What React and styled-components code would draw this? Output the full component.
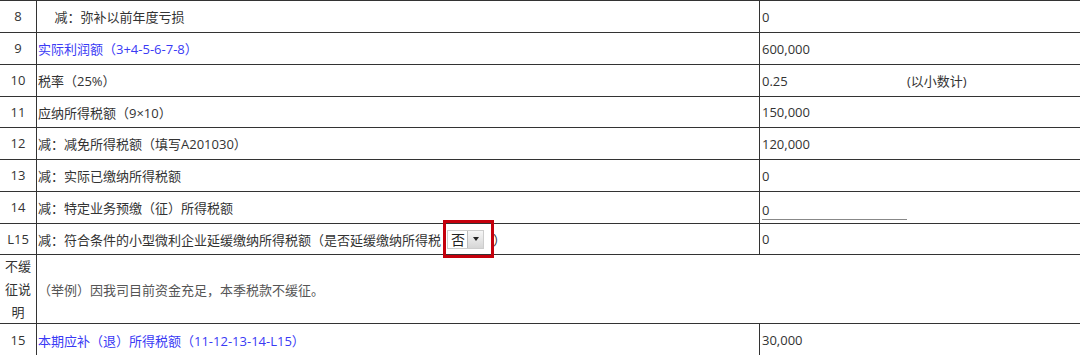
import React from 'react';
import styled, { createGlobalStyle } from 'styled-components';

const GlobalStyle = createGlobalStyle`
  html, body {
    margin: 0;
    padding: 0;
    background: #ffffff;
  }
  body {
    font-family: "Open Sans", "Noto Sans CJK SC", sans-serif;
    font-size: 13px;
    color: #333333;
  }
`;

const rows = [
  { no: '8', label: '\u3000\u00a0减：弥补以前年度亏损', value: '0', h: 32 },
  { no: '9', label: '实际利润额（3+4-5-6-7-8）', value: '600,000', h: 32, link: true },
  { no: '10', label: '税率（25%）', value: '0.25', note: '(以小数计)', h: 32 },
  { no: '11', label: '应纳所得税额（9×10）', value: '150,000', h: 31 },
  { no: '12', label: '减：减免所得税额（填写A201030）', value: '120,000', h: 32 },
  { no: '13', label: '减：实际已缴纳所得税额', value: '0', h: 32 },
  { no: '14', label: '减：特定业务预缴（征）所得税额', value: '0', input: true, h: 32 },
];

const Sheet = styled.div`
  width: 1080px;
  height: 355px;
  overflow: hidden;
  border-top: 1px solid #333;
`;

const Row = styled.div`
  display: grid;
  grid-template-columns: 37px 723px 1fr;
  height: ${(p) => p.$h}px;
  box-sizing: border-box;
  border-bottom: 1px solid #333;
`;

const NumCell = styled.div`
  display: flex;
  align-items: center;
  justify-content: center;
  border-right: 1px solid #333;
  line-height: 23px;
  text-align: center;
  padding: 0 2px;
`;

const LabelCell = styled.div`
  display: flex;
  align-items: center;
  padding-left: 1px;
  border-right: 1px solid #333;
  color: ${(p) => (p.$link ? '#3a3af5' : '#333')};
  white-space: nowrap;
`;

const ValueCell = styled.div`
  display: flex;
  align-items: center;
  padding-left: 2px;
`;

const NoteCell = styled.div`
  grid-column: 2 / 4;
  display: flex;
  align-items: center;
  padding-left: 1px;
  color: #555;
`;

const Amount = styled.span`
  width: 145px;
`;

const Hint = styled.span`
  color: #333;
`;

const UnderlineInput = styled.span`
  display: inline-block;
  width: 145px;
  height: 18px;
  line-height: 18px;
  border-bottom: 1px solid #888;
  margin-top: 6px;
`;

const Picker = styled.span`
  position: relative;
  display: inline-flex;
  margin-left: 6px;
  margin-right: 9px;
`;

const SelectBox = styled.span`
  display: inline-flex;
  align-items: stretch;
  height: 19px;
  border: 1px solid #cdcdcd;
  background: #fff;
  box-sizing: border-box;
`;

const SelectValue = styled.span`
  display: flex;
  align-items: center;
  padding: 0 2px 0 3px;
  font-size: 14px;
  color: #222;
`;

const SelectButton = styled.span`
  width: 15px;
  display: flex;
  align-items: center;
  justify-content: center;
  background: linear-gradient(#f6f6f6, #d6d6d6);
  border-left: 1px solid #bcbcbc;

  &::after {
    content: '';
    border-top: 4px solid #222;
    border-left: 3px solid transparent;
    border-right: 3px solid transparent;
  }
`;

const Highlight = styled.span`
  position: absolute;
  left: -4px;
  right: -10px;
  top: -10px;
  bottom: -9px;
  border: 3px solid #c4000c;
  pointer-events: none;
`;

const App = () => (
  <>
    <GlobalStyle />
    <Sheet>
      {rows.map((r) => (
        <Row key={r.no} $h={r.h}>
          <NumCell>{r.no}</NumCell>
          <LabelCell $link={r.link}>{r.label}</LabelCell>
          <ValueCell>
            {r.input ? (
              <UnderlineInput>{r.value}</UnderlineInput>
            ) : (
              <Amount>{r.value}</Amount>
            )}
            {r.note && <Hint>{r.note}</Hint>}
          </ValueCell>
        </Row>
      ))}
      <Row $h={31}>
        <NumCell>L15</NumCell>
        <LabelCell>
          减：符合条件的小型微利企业延缓缴纳所得税额（是否延缓缴纳所得税
          <Picker>
            <SelectBox>
              <SelectValue>否</SelectValue>
              <SelectButton />
            </SelectBox>
            <Highlight />
          </Picker>
          ）
        </LabelCell>
        <ValueCell>0</ValueCell>
      </Row>
      <Row $h={69}>
        <NumCell>不缓征说明</NumCell>
        <NoteCell>（举例）因我司目前资金充足，本季税款不缓征。</NoteCell>
      </Row>
      <Row $h={33}>
        <NumCell>15</NumCell>
        <LabelCell $link>本期应补（退）所得税额（11-12-13-14-L15）</LabelCell>
        <ValueCell>30,000</ValueCell>
      </Row>
    </Sheet>
  </>
);

export default App;
